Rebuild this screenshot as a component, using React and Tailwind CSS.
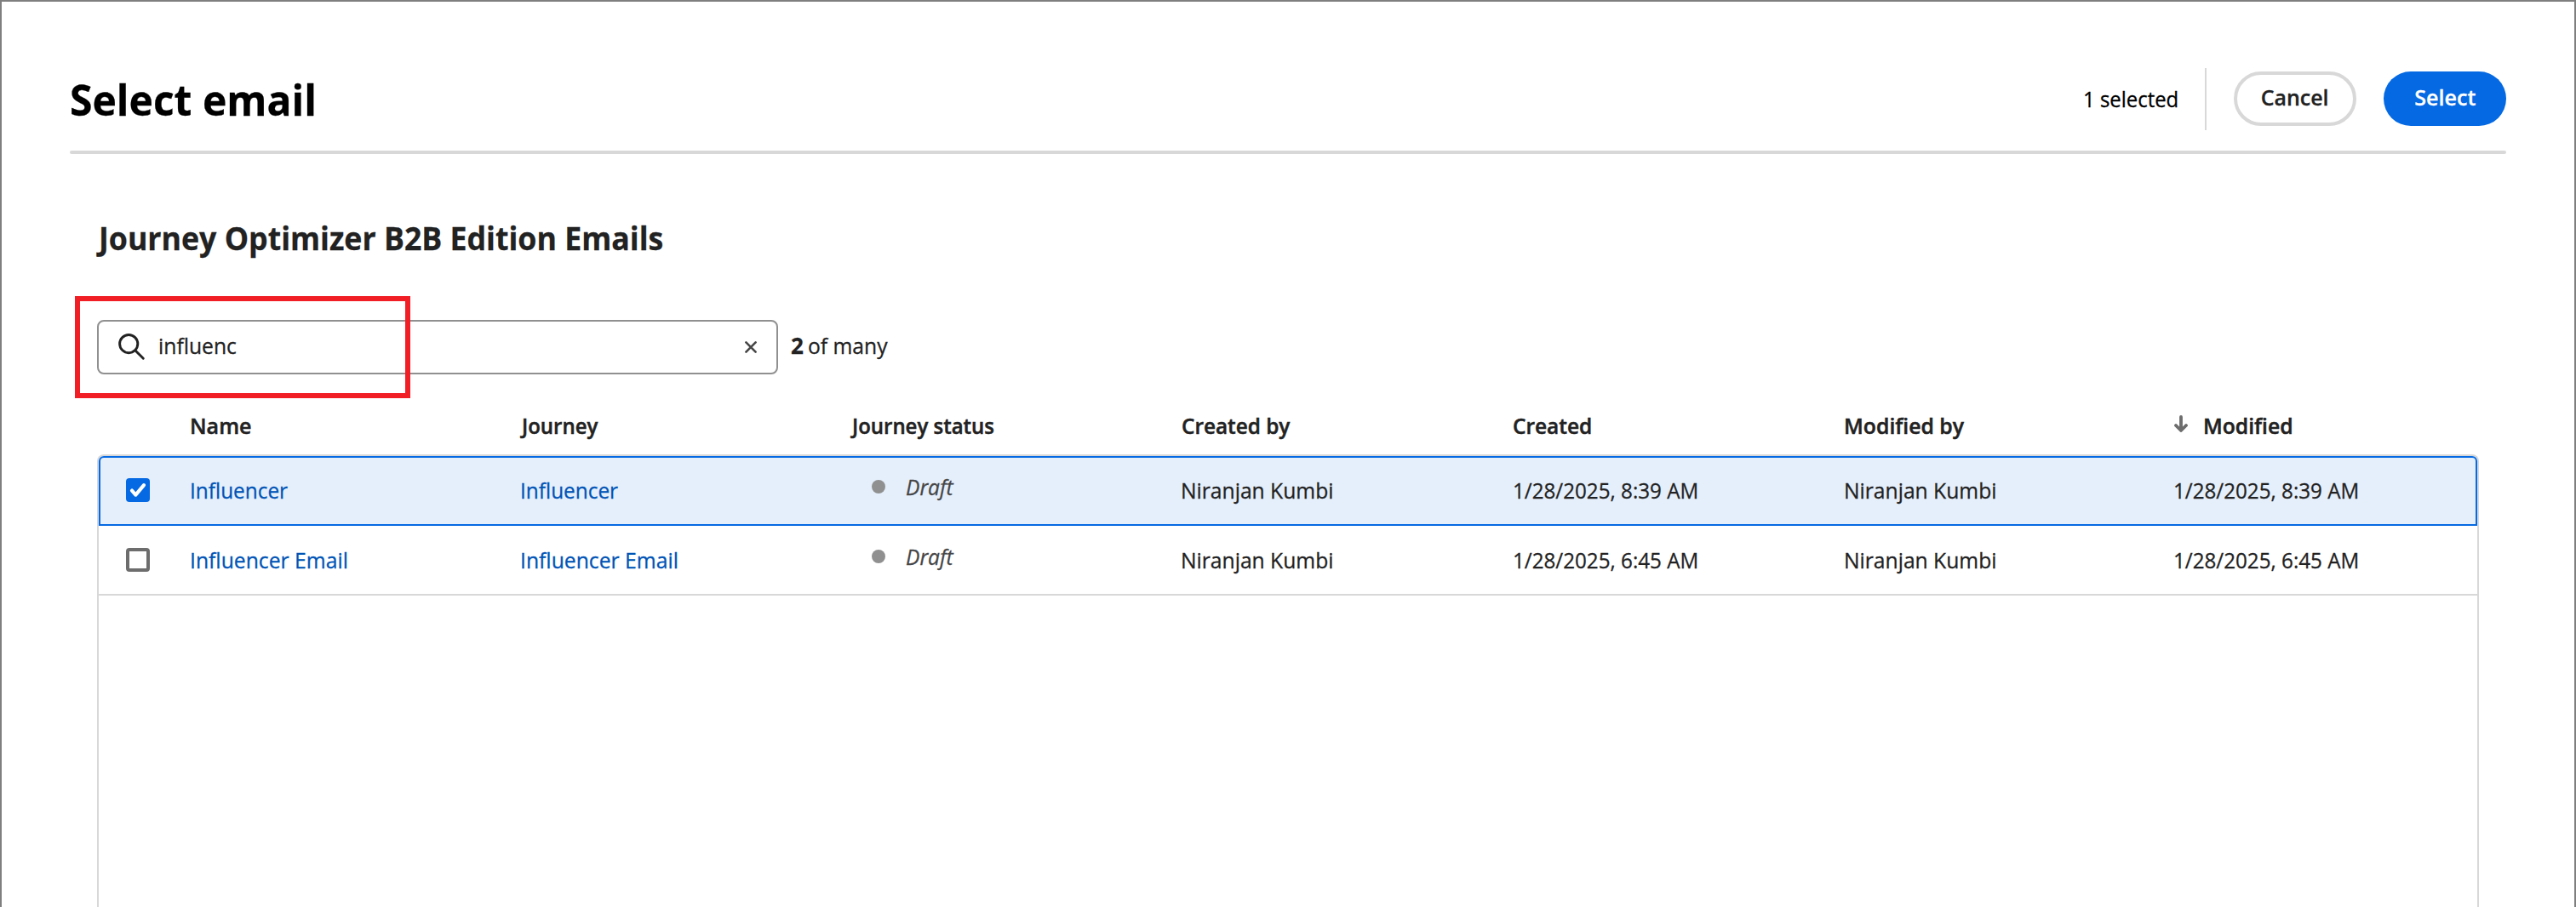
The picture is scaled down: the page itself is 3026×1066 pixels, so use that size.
import React from "react";

const columns = [
  { label: "Name", fit: "scale-x-[0.963]" },
  { label: "Journey", fit: "ml-[2px] scale-x-[0.923]" },
  { label: "Journey status", fit: "ml-[2px] scale-x-[0.922]" },
  { label: "Created by", fit: "ml-px scale-x-[0.936]" },
  { label: "Created", fit: "scale-x-[0.94]" },
  { label: "Modified by", fit: "scale-x-[0.953]" },
  { label: "Modified", fit: "scale-x-[0.95]", sorted: true },
];

const rows = [
  { name: "Influencer", status: "Draft", person: "Niranjan Kumbi", date: "1/28/2025, 8:39 AM", selected: true, fit: "scale-x-[0.938]" },
  { name: "Influencer Email", status: "Draft", person: "Niranjan Kumbi", date: "1/28/2025, 6:45 AM", selected: false, fit: "scale-x-[0.951]" },
];

const grid = "grid grid-cols-[107px_388px_388px_388px_390px_389px_387px_1fr] items-center";

function T({ className = "", children }) {
  return <span className={`inline-block origin-left whitespace-nowrap ${className}`}>{children}</span>;
}

function Checkbox({ checked }) {
  if (!checked) return <span className="block size-7 rounded-[4px] border-4 border-[#6d6d6d] bg-white" />;
  return (
    <span className="flex size-7 items-center justify-center rounded-[4px] bg-[#0469e3]">
      <svg viewBox="0 0 28 28" className="size-7" fill="none" stroke="white" strokeWidth="4.2" strokeLinecap="round" strokeLinejoin="round">
        <path d="M7 14.6 L11.4 19.6 L21 8.2" />
      </svg>
    </span>
  );
}

function Row({ row }) {
  const frame = row.selected
    ? "rounded-t-[6px] bg-[#e5effb] pb-[2px] ring-2 ring-inset ring-[#0469e3]"
    : "border-b-2 border-[#d8d8d8]";
  const person = <T className="scale-x-[0.948]">{row.person}</T>;
  const date = <T className="scale-x-[0.93]">{row.date}</T>;
  return (
    <div className={`${grid} h-[82px] ${frame}`}>
      <div className="pl-8"><Checkbox checked={row.selected} /></div>
      <a className="text-[#0054b6]"><T className={row.fit}>{row.name}</T></a>
      <a className="text-[#0054b6]"><T className={row.fit}>{row.name}</T></a>
      <div className="flex items-center gap-6 pb-2 pl-[25px] text-[#464646]">
        <span className="size-4 rounded-full bg-[#909090]" />
        <T className="scale-x-[0.943] italic">{row.status}</T>
      </div>
      <div>{person}</div>
      <div>{date}</div>
      <div>{person}</div>
      <div>{date}</div>
    </div>
  );
}

export default function App() {
  return (
    <div className="flex h-[1066px] w-full flex-col overflow-hidden border-x-2 border-t-2 border-[#7f7f7f] bg-white px-20 font-['Open_Sans',sans-serif] text-[26px] leading-9 text-[#222222] [-webkit-text-stroke:0.3px]">
      <header className="flex h-[175px] shrink-0 items-center justify-between pt-[53px]">
        <h1 className="text-[51px] leading-[60px] font-bold text-black"><T className="scale-x-[0.942]">Select email</T></h1>
        <div className="flex items-center">
          <span className="w-[111px] text-black"><T className="ml-px scale-x-[0.92]">1 selected</T></span>
          <span className="ml-[33px] h-[73px] w-[2px] bg-[#d8d8d8]" />
          <button className="ml-8 flex h-16 w-36 justify-center rounded-full border-4 border-[#d8d8d8] pt-2 font-semibold">
            <span className="inline-block scale-x-[0.96]">Cancel</span>
          </button>
          <button className="ml-8 flex h-16 w-36 justify-center rounded-full bg-[#0469e3] pt-3 font-semibold text-white">
            <span className="inline-block scale-x-[0.965]">Select</span>
          </button>
        </div>
      </header>
      <div className="h-1 shrink-0 rounded-full bg-[#d8d8d8]" />

      <main className="flex min-h-0 flex-1 flex-col px-8 pt-[72px]">
        <h2 className="mb-px h-[52px] text-[38px] leading-[52px] font-bold"><T className="ml-[2px] scale-x-[0.939]">Journey Optimizer B2B Edition Emails</T></h2>

        <div className="relative mt-[70px] flex items-center">
          <label className="flex h-16 w-[800px] items-center rounded-lg border-2 border-[#909090] pr-[23px] pl-[22px]">
            <svg viewBox="0 0 34 34" className="size-[34px]" fill="none" stroke="#222222" strokeWidth="2.9" strokeLinecap="round">
              <circle cx="13.2" cy="13.1" r="10.6" />
              <path d="M21 21 L30.3 30.2" />
            </svg>
            <T className="mb-[4px] ml-[14px] scale-x-[0.95]">influenc</T>
            <svg viewBox="0 0 14 14" className="ml-auto size-[14px]" fill="none" stroke="#464646" strokeWidth="2.6" strokeLinecap="round">
              <path d="M1.4 1.4 L12.6 12.6 M12.6 1.4 L1.4 12.6" />
            </svg>
          </label>
          <T className="mb-[4px] ml-[15px] w-[20px] font-bold">2</T>
          <T className="mb-[4px] scale-x-[0.948]">of many</T>
          <div className="absolute top-[-28px] left-[-26px] h-[120px] w-[394px] border-6 border-[#f11e25]" />
        </div>

        <div className={`${grid} mx-[2px] h-[94px] shrink-0 pt-[26px] font-semibold [-webkit-text-stroke:0.5px]`}>
          <span />
          {columns.map((c) => (
            <div key={c.label} className={c.sorted ? "flex items-center" : ""}>
              {c.sorted && (
                <svg viewBox="0 0 16 20" className="mr-[18px] mb-[4px] ml-px h-5 w-4" fill="none" stroke="#6d6d6d" strokeWidth="3.8" strokeLinecap="round" strokeLinejoin="round">
                  <path d="M8 2 V16 M2 12 L8 18 L14 12" />
                </svg>
              )}
              <T className={c.fit}>{c.label}</T>
            </div>
          ))}
        </div>

        <div className="min-h-0 flex-1 rounded-t-lg border-x-2 border-t-2 border-[#d8d8d8]">
          {rows.map((r) => <Row key={r.name} row={r} />)}
        </div>
      </main>
    </div>
  );
}
